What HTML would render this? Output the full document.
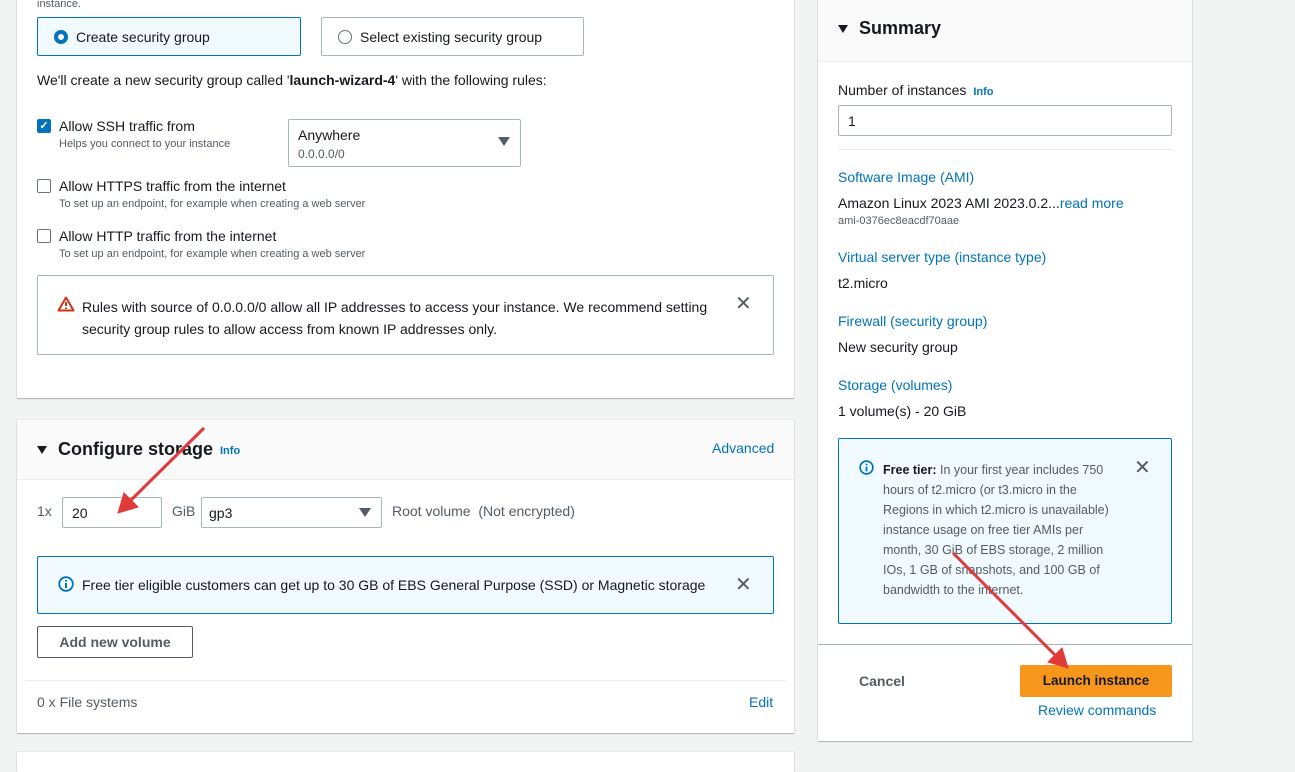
<!DOCTYPE html>
<html><head><style>
*{margin:0;padding:0;box-sizing:border-box}
body{width:1295px;height:755px;overflow:hidden;background:#f2f3f3;font-family:"Liberation Sans",sans-serif;color:#16191f;font-size:14px;position:relative}
.a{position:absolute}
.p{background:#fff;box-shadow:0 1px 1px rgba(0,0,0,.25),0 0 1px rgba(0,0,0,.2)}
.s{font-size:11px;color:#545b64}
.l{color:#0073bb}
.cb{width:14px;height:14px;border:1px solid #687078;border-radius:2px;background:#fff}
.x{font-size:20px;color:#545b64;font-weight:300}
</style></head><body>
<div class="a p" style="left:17px;top:-10px;width:777px;height:408px"></div>
<div class="a s" style="left:37px;top:-2px">instance.</div>
<div class="a" style="left:37px;top:17px;width:264px;height:39px;border:1px solid #0073bb;background:#f1faff;border-radius:2px"></div>
<div class="a" style="left:54px;top:30px;width:14px;height:14px;border-radius:50%;border:4px solid #0073bb;background:#fff"></div>
<div class="a" style="left:76px;top:29px">Create security group</div>
<div class="a" style="left:321px;top:17px;width:263px;height:39px;border:1px solid #aab7b8;border-radius:2px"></div>
<div class="a" style="left:338px;top:30px;width:14px;height:14px;border-radius:50%;border:1px solid #687078"></div>
<div class="a" style="left:360px;top:29px">Select existing security group</div>
<div class="a" style="left:37px;top:72px">We'll create a new security group called '<b>launch-wizard-4</b>' with the following rules:</div>
<div class="a cb" style="left:37px;top:119px;background:#0073bb;border-color:#0073bb;color:#fff;font-size:11px;line-height:12px;text-align:center;font-weight:bold">✓</div>
<div class="a" style="left:59px;top:118px">Allow SSH traffic from</div>
<div class="a s" style="left:59px;top:138px">Helps you connect to your instance</div>
<div class="a" style="left:288px;top:119px;width:233px;height:48px;border:1px solid #aab7b8;border-radius:2px"></div>
<div class="a" style="left:298px;top:127px">Anywhere</div>
<div class="a s" style="left:298px;top:147px;font-size:12px">0.0.0.0/0</div>
<div class="a" style="left:498px;top:137px;border-left:6px solid transparent;border-right:6px solid transparent;border-top:9px solid #545b64"></div>
<div class="a cb" style="left:37px;top:179px"></div>
<div class="a" style="left:59px;top:178px">Allow HTTPS traffic from the internet</div>
<div class="a s" style="left:59px;top:198px">To set up an endpoint, for example when creating a web server</div>
<div class="a cb" style="left:37px;top:229px"></div>
<div class="a" style="left:59px;top:228px">Allow HTTP traffic from the internet</div>
<div class="a s" style="left:59px;top:248px">To set up an endpoint, for example when creating a web server</div>
<div class="a" style="left:37px;top:275px;width:737px;height:80px;border:1px solid #aab7b8;border-radius:2px"></div>
<svg class="a" style="left:57px;top:296px" width="18" height="16" viewBox="0 0 18 16"><path d="M9 1.5L16.5 14.5H1.5Z" fill="none" stroke="#d13212" stroke-width="2" stroke-linejoin="round"/><path d="M9 6v4M9 11.5v1.5" stroke="#d13212" stroke-width="2"/></svg>
<div class="a" style="left:82px;top:296px;width:640px;line-height:22px">Rules with source of 0.0.0.0/0 allow all IP addresses to access your instance. We recommend setting security group rules to allow access from known IP addresses only.</div>
<div class="a x" style="left:735px;top:291px">✕</div>
<div class="a p" style="left:17px;top:420px;width:777px;height:313px"></div>
<div class="a" style="left:17px;top:420px;width:777px;height:60px;background:#fafafa;border-bottom:1px solid #eaeded"></div>
<div class="a" style="left:37px;top:446px;border-left:5px solid transparent;border-right:5px solid transparent;border-top:8px solid #16191f"></div>
<div class="a" style="left:58px;top:439px;font-size:18px;font-weight:bold">Configure storage</div>
<div class="a l" style="left:220px;top:445px;font-size:11px;font-weight:bold">Info</div>
<div class="a l" style="left:712px;top:440px">Advanced</div>
<div class="a" style="left:37px;top:503px;color:#545b64">1x</div>
<div class="a" style="left:62px;top:497px;width:100px;height:31px;border:1px solid #aab7b8;border-radius:2px;padding:7px 9px">20</div>
<div class="a" style="left:172px;top:503px;color:#545b64">GiB</div>
<div class="a" style="left:201px;top:497px;width:181px;height:31px;border:1px solid #aab7b8;border-radius:2px;padding:7px 7px">gp3</div>
<div class="a" style="left:359px;top:508px;border-left:6px solid transparent;border-right:6px solid transparent;border-top:9px solid #545b64"></div>
<div class="a" style="left:392px;top:503px;color:#545b64">Root volume&nbsp; (Not encrypted)</div>
<div class="a" style="left:37px;top:556px;width:737px;height:58px;border:1px solid #0073bb;background:#f1faff;border-radius:2px"></div>
<svg class="a" style="left:58px;top:576px" width="16" height="16" viewBox="0 0 16 16"><circle cx="8" cy="8" r="6.8" fill="none" stroke="#0073bb" stroke-width="1.8"/><path d="M8 7v5M8 4v1.6" stroke="#0073bb" stroke-width="2"/></svg>
<div class="a" style="left:82px;top:577px">Free tier eligible customers can get up to 30 GB of EBS General Purpose (SSD) or Magnetic storage</div>
<div class="a x" style="left:735px;top:572px">✕</div>
<div class="a" style="left:37px;top:626px;width:156px;height:32px;border:1px solid #545b64;border-radius:2px;text-align:center;line-height:30px;font-weight:bold;color:#545b64">Add new volume</div>
<div class="a" style="left:25px;top:680px;width:761px;border-top:1px solid #eaeded"></div>
<div class="a" style="left:37px;top:694px;color:#545b64">0 x File systems</div>
<div class="a l" style="left:749px;top:694px">Edit</div>
<div class="a p" style="left:17px;top:752px;width:777px;height:20px"></div>
<div class="a p" style="left:818px;top:-10px;width:374px;height:751px"></div>
<div class="a" style="left:818px;top:-10px;width:374px;height:72px;background:#fafafa;border-bottom:1px solid #eaeded"></div>
<div class="a" style="left:838px;top:25px;border-left:5px solid transparent;border-right:5px solid transparent;border-top:8px solid #16191f"></div>
<div class="a" style="left:859px;top:18px;font-size:18px;font-weight:bold">Summary</div>
<div class="a" style="left:838px;top:82px">Number of instances <span class="l" style="font-size:11px;font-weight:bold">&nbsp;Info</span></div>
<div class="a" style="left:838px;top:105px;width:334px;height:31px;border:1px solid #aab7b8;border-radius:2px;padding:7px 9px">1</div>
<div class="a" style="left:838px;top:149px;width:334px;border-top:1px solid #eaeded"></div>
<div class="a l" style="left:838px;top:169px">Software Image (AMI)</div>
<div class="a" style="left:838px;top:195px">Amazon Linux 2023 AMI 2023.0.2...<span class="l">read more</span></div>
<div class="a s" style="left:838px;top:215px">ami-0376ec8eacdf70aae</div>
<div class="a l" style="left:838px;top:249px">Virtual server type (instance type)</div>
<div class="a" style="left:838px;top:275px">t2.micro</div>
<div class="a l" style="left:838px;top:313px">Firewall (security group)</div>
<div class="a" style="left:838px;top:339px">New security group</div>
<div class="a l" style="left:838px;top:377px">Storage (volumes)</div>
<div class="a" style="left:838px;top:403px">1 volume(s) - 20 GiB</div>
<div class="a" style="left:838px;top:438px;width:334px;height:186px;border:1px solid #0073bb;background:#f1faff;border-radius:2px"></div>
<svg class="a" style="left:859px;top:460px" width="15" height="15" viewBox="0 0 16 16"><circle cx="8" cy="8" r="6.8" fill="none" stroke="#0073bb" stroke-width="1.8"/><path d="M8 7v5M8 4v1.6" stroke="#0073bb" stroke-width="2"/></svg>
<div class="a" style="left:883px;top:460px;width:232px;font-size:12.5px;line-height:20px;color:#545b64"><b style="color:#16191f">Free tier:</b> In your first year includes 750 hours of t2.micro (or t3.micro in the Regions in which t2.micro is unavailable) instance usage on free tier AMIs per month, 30 GiB of EBS storage, 2 million IOs, 1 GB of snapshots, and 100 GB of bandwidth to the internet.</div>
<div class="a x" style="left:1134px;top:455px">✕</div>
<div class="a" style="left:818px;top:644px;width:374px;border-top:1px solid #aab7b8"></div>
<div class="a" style="left:859px;top:673px;font-weight:bold;color:#545b64">Cancel</div>
<div class="a" style="left:1020px;top:665px;width:152px;height:32px;background:#f7961c;border-radius:2px;text-align:center;line-height:32px;font-weight:bold;font-size:13.5px">Launch instance</div>
<div class="a l" style="left:1038px;top:702px">Review commands</div>
<svg class="a" style="left:0;top:0" width="1295" height="755"><g stroke="#e03a3a" stroke-width="3" fill="#e03a3a"><line x1="204" y1="428" x2="126" y2="505"/><path d="M118 513l6-20 14 14z" stroke-width="1"/><line x1="953" y1="553" x2="1060" y2="660"/><path d="M1068 668l-20-6 14-14z" stroke-width="1"/></g></svg>
</body></html>
